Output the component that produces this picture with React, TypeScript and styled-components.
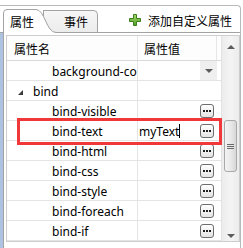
import React from "react";
import styled, { createGlobalStyle } from "styled-components";

const Global = createGlobalStyle`
  html, body { margin: 0; padding: 0; background: #fff; }
  * { box-sizing: border-box; }
`;

const Root = styled.div`
  position: relative;
  width: 243px;
  height: 248px;
  overflow: hidden;
  background: #fff;
  font-family: "Noto Sans", "Noto Sans CJK SC", sans-serif;
  font-size: 12px;
  color: #000;
`;

const Frame = styled.div`
  margin-top: 5px;
  width: 241px;
  height: 243px;
  border-top: 1px solid #b9b9b9;
  border-right: 1px solid #b9b9b9;
  border-top-right-radius: 4px;
  display: flex;
  flex-direction: column;
`;

const TabStrip = styled.div`
  height: 27px;
  display: flex;
  align-items: flex-end;
  padding-left: 3px;
  padding-right: 8px;
  border-bottom: 1px solid #a3a3a3;
  font-family: "Noto Sans CJK SC", sans-serif;
`;

const ActiveTab = styled.div`
  position: relative;
  z-index: 1;
  width: 52px;
  height: 24px;
  margin-bottom: -1px;
  padding-left: 7px;
  display: flex;
  align-items: center;
  svg { position: absolute; left: 0; top: 0; z-index: -1; }
`;

const InactiveTab = styled.div`
  width: 55px;
  height: 22px;
  margin-left: -12px;
  padding-left: 20px;
  display: flex;
  align-items: center;
  background: linear-gradient(#f6f6f6, #ececec);
  border: 1px solid #a3a3a3;
  border-bottom: none;
  border-top-right-radius: 5px;
`;

const Fill = styled.div`
  flex: 1;
`;

const AddButton = styled.div`
  height: 24px;
  display: flex;
  align-items: center;
  gap: 7px;
  margin-bottom: 0px;
`;

const Panel = styled.div`
  flex: 1;
  display: flex;
  border-left: 3px solid #adc3e1;
`;

const PanelInner = styled.div`
  flex: 1;
  border-left: 1px solid #a3a3a3;
  padding: 2px 0 6px 2px;
`;

const Grid = styled.div`
  width: 234px;
  height: 207px;
  border: 1px solid #cdcdcd;
  display: flex;
`;

const Table = styled.div`
  flex: 1;
  display: flex;
  flex-direction: column;
`;

const HeaderRow = styled.div`
  height: 25px;
  display: flex;
  border-bottom: 1px solid #d9d9d9;
  background: #fdfdfd;
  font-family: "Noto Sans CJK SC", sans-serif;
`;

const HeaderCell = styled.div<{ $w?: number; $pad: number }>`
  ${(p) => (p.$w ? `width: ${p.$w}px;` : "flex: 1;")}
  padding-left: ${(p) => p.$pad}px;
  display: flex;
  align-items: center;
  border-right: 1px solid #e6e6e6;
`;

const HeaderSpacer = styled.div`
  width: 4px;
`;

const Row = styled.div`
  height: 20px;
  display: flex;
  border-bottom: 1px solid #e4e4e4;
`;

const NameCell = styled.div<{ $indent: number }>`
  width: 131px;
  padding-left: ${(p) => p.$indent}px;
  padding-top: 2px;
  border-right: 1px solid #e4e4e4;
  white-space: nowrap;
  overflow: hidden;
  line-height: 17px;
  display: flex;
  align-items: flex-start;
`;

const Expander = styled.span`
  width: 0;
  height: 0;
  margin-top: 7px;
  margin-right: 10px;
  border-left: 5px solid transparent;
  border-bottom: 5px solid #3a3a3a;
`;

const ValueCell = styled.div`
  flex: 1;
  display: flex;
  align-items: center;
  padding-left: 1px;
  padding-top: 1px;
  line-height: 17px;
`;

const ValueText = styled.span`
  flex: 1;
  display: flex;
  align-items: center;
`;

const Caret = styled.span`
  width: 1px;
  height: 14px;
  background: #000;
`;

const DropButton = styled.div`
  width: 17px;
  height: 19px;
  margin-top: -1px;
  margin-right: 4px;
  background: #efefef;
  display: flex;
  align-items: center;
  justify-content: center;
`;

const DownTri = styled.span`
  width: 0;
  height: 0;
  border-left: 4px solid transparent;
  border-right: 4px solid transparent;
  border-top: 4px solid #5c5c5c;
`;

const UpTri = styled.span`
  width: 0;
  height: 0;
  border-left: 4px solid transparent;
  border-right: 4px solid transparent;
  border-bottom: 4px solid #5c5c5c;
`;

const EllipsisButton = styled.div`
  width: 14px;
  height: 14px;
  margin-right: 7px;
  border: 1px solid #6d6d6d;
  border-radius: 3px;
  background: linear-gradient(#ffffff, #e4e4e4);
  display: flex;
  align-items: center;
  justify-content: center;
`;

const Scrollbar = styled.div`
  width: 18px;
  border-left: 1px solid #e2e2e2;
  background: linear-gradient(90deg, #ececec, #f4f4f4 50%, #ececec);
  display: flex;
  flex-direction: column;
`;

const ArrowBox = styled.div<{ $h: number }>`
  height: ${(p) => p.$h}px;
  display: flex;
  align-items: center;
  justify-content: center;
`;

const Track = styled.div`
  flex: 1;
  padding: 0 2px 0 2px;
`;

const Thumb = styled.div`
  margin-top: 62px;
  height: 52px;
  border: 1px solid #a8a8a8;
  border-radius: 3px;
  background: linear-gradient(90deg, #f4f4f4, #e6e6e6 60%, #d6d6d6);
  display: flex;
  flex-direction: column;
  align-items: center;
  justify-content: center;
  gap: 1px;
`;

const Grip = styled.span`
  width: 7px;
  height: 1px;
  background: #6a6a6a;
`;

const Highlight = styled.div`
  position: absolute;
  left: 17px;
  top: 118px;
  width: 205px;
  height: 27px;
  border: 3px solid #f0383a;
  pointer-events: none;
`;

const Dots = () => (
  <svg width="8" height="2" viewBox="0 0 8 2">
    <rect x="0" y="0" width="2" height="2" fill="#1e1e1e" />
    <rect x="3" y="0" width="2" height="2" fill="#1e1e1e" />
    <rect x="6" y="0" width="2" height="2" fill="#1e1e1e" />
  </svg>
);

const PlusIcon = () => (
  <svg width="12" height="12" viewBox="0 0 12 12">
    <defs>
      <linearGradient id="pg" x1="0" y1="0" x2="0" y2="1">
        <stop offset="0" stopColor="#a6dc6e" />
        <stop offset="1" stopColor="#4f9e24" />
      </linearGradient>
    </defs>
    <path
      d="M4.5 0.5h3v4h4v3h-4v4h-3v-4h-4v-3h4z"
      fill="url(#pg)"
      stroke="#3d7d1c"
      strokeWidth="1"
    />
  </svg>
);

const TabShape = () => (
  <svg width="53" height="24" viewBox="0 0 53 24">
    <path
      d="M0.5 24 L0.5 4 Q0.5 0.5 4 0.5 L33 0.5 C42 0.5 43 23.5 53 23.5 L53 24 Z"
      fill="#fff"
    />
    <path
      d="M0.5 24 L0.5 4 Q0.5 0.5 4 0.5 L33 0.5 C42 0.5 43 23.5 53 23.5"
      fill="none"
      stroke="#a3a3a3"
      strokeWidth="1"
    />
  </svg>
);

type Item =
  | { kind: "prop"; name: string; indent: number; control: "drop" | "dots"; value?: string; editing?: boolean }
  | { kind: "group"; name: string };

const items: Item[] = [
  { kind: "prop", name: "background-color", indent: 45, control: "drop" },
  { kind: "group", name: "bind" },
  { kind: "prop", name: "bind-visible", indent: 45, control: "dots" },
  { kind: "prop", name: "bind-text", indent: 45, control: "dots", value: "myText", editing: true },
  { kind: "prop", name: "bind-html", indent: 45, control: "dots" },
  { kind: "prop", name: "bind-css", indent: 45, control: "dots" },
  { kind: "prop", name: "bind-style", indent: 45, control: "dots" },
  { kind: "prop", name: "bind-foreach", indent: 45, control: "dots" },
  { kind: "prop", name: "bind-if", indent: 45, control: "dots" },
];

export default function App() {
  return (
    <Root>
      <Global />
      <Frame>
        <TabStrip>
          <ActiveTab>
            <TabShape />
            属性
          </ActiveTab>
          <InactiveTab>事件</InactiveTab>
          <Fill />
          <AddButton>
            <PlusIcon />
            添加自定义属性
          </AddButton>
        </TabStrip>
        <Panel>
          <PanelInner>
            <Grid>
              <Table>
                <HeaderRow>
                  <HeaderCell $w={131} $pad={7}>属性名</HeaderCell>
                  <HeaderCell $pad={6}>属性值</HeaderCell>
                  <HeaderSpacer />
                </HeaderRow>
                {items.map((it, i) =>
                  it.kind === "group" ? (
                    <Row key={i}>
                      <NameCell $indent={11}>
                        <Expander />
                        {it.name}
                      </NameCell>
                      <ValueCell />
                    </Row>
                  ) : (
                    <Row key={i}>
                      <NameCell $indent={it.indent}>{it.name}</NameCell>
                      <ValueCell>
                        <ValueText>
                          {it.value}
                          {it.editing && <Caret />}
                        </ValueText>
                        {it.control === "drop" ? (
                          <DropButton>
                            <DownTri />
                          </DropButton>
                        ) : (
                          <EllipsisButton>
                            <Dots />
                          </EllipsisButton>
                        )}
                      </ValueCell>
                    </Row>
                  )
                )}
              </Table>
              <Scrollbar>
                <ArrowBox $h={22}>
                  <UpTri />
                </ArrowBox>
                <Track>
                  <Thumb>
                    <Grip />
                    <Grip />
                    <Grip />
                  </Thumb>
                </Track>
                <ArrowBox $h={10}>
                  <DownTri />
                </ArrowBox>
              </Scrollbar>
            </Grid>
          </PanelInner>
        </Panel>
      </Frame>
      <Highlight />
    </Root>
  );
}
